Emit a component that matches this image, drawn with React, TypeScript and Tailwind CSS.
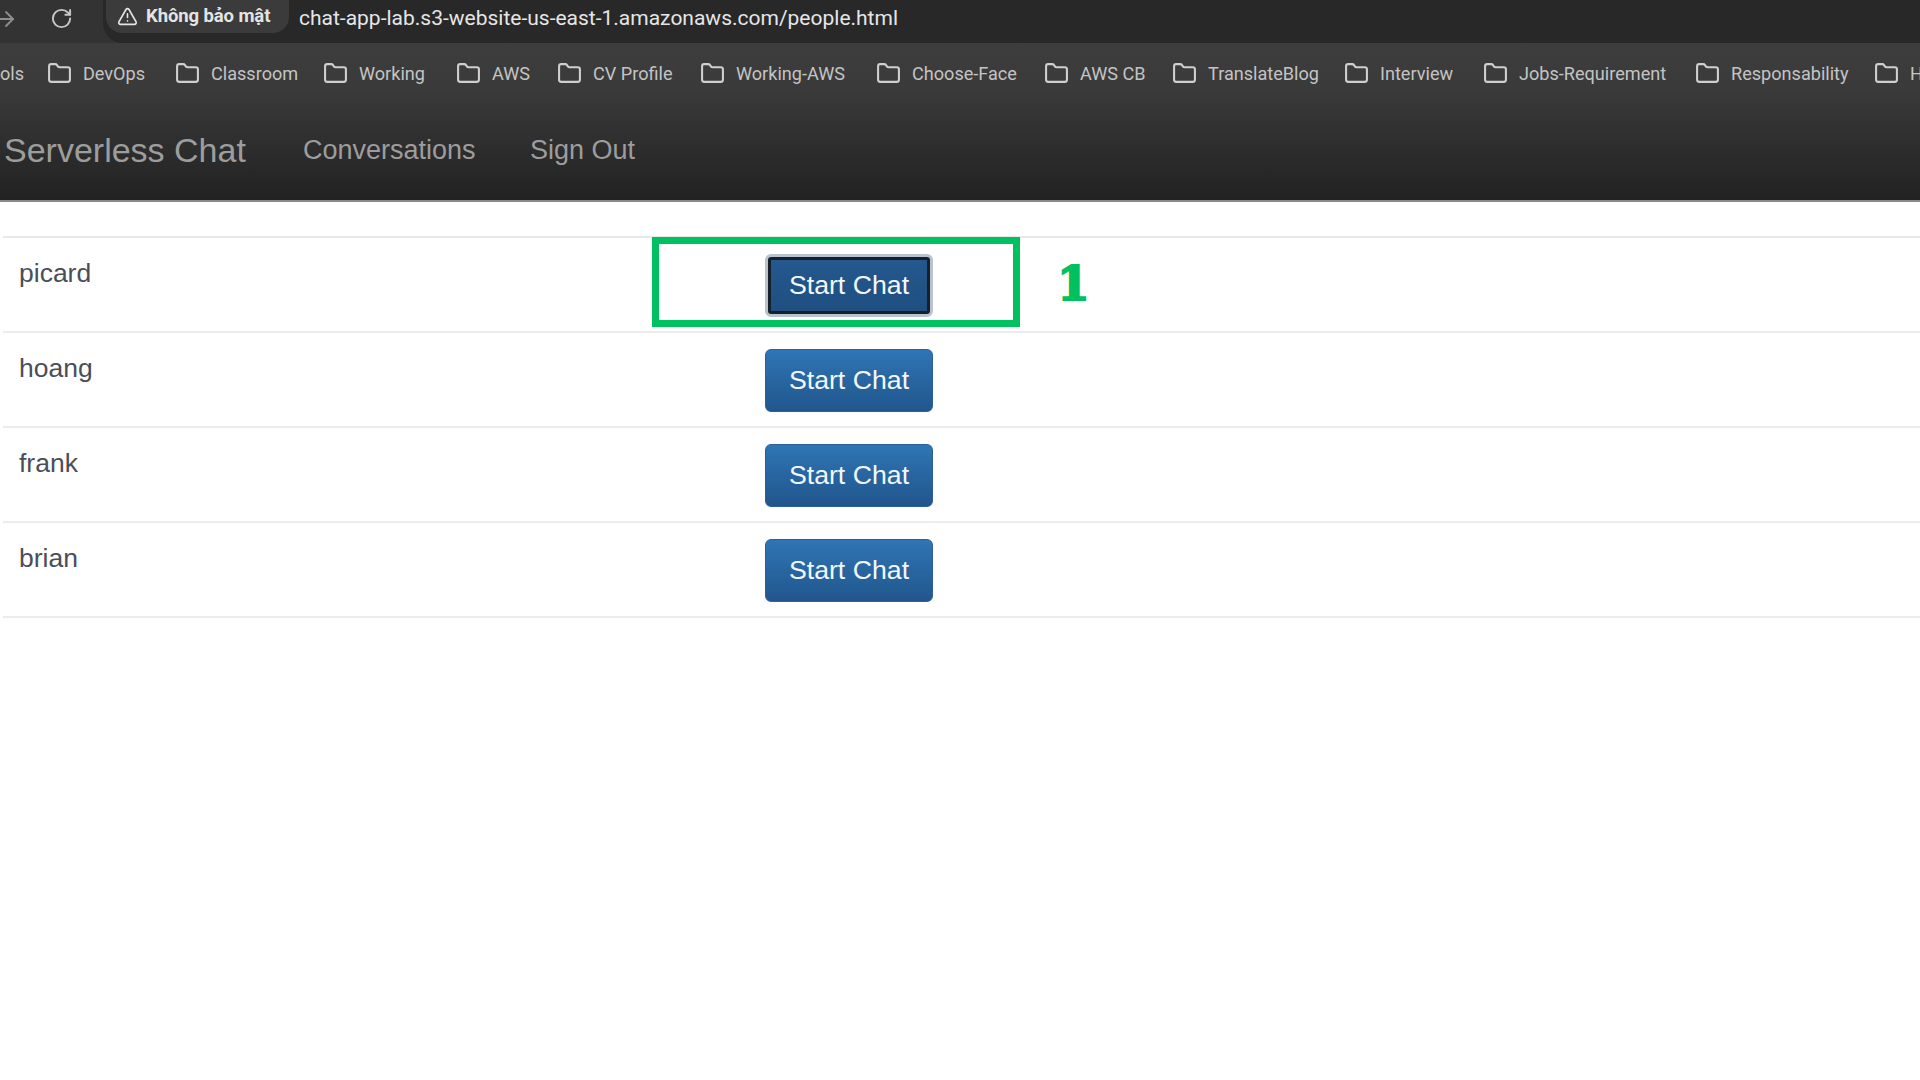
import { AlertTriangle, ArrowRight, Folder, RotateCw } from 'lucide-react';

// 책갈피 막대: 폭을 고정해 원본의 시작 위치에 맞춘다
const bookmarks = [
  { label: 'DevOps', width: 'w-[128px]' },
  { label: 'Classroom', width: 'w-[148px]' },
  { label: 'Working', width: 'w-[133px]' },
  { label: 'AWS', width: 'w-[101px]' },
  { label: 'CV Profile', width: 'w-[143px]' },
  { label: 'Working-AWS', width: 'w-[176px]' },
  { label: 'Choose-Face', width: 'w-[168px]' },
  { label: 'AWS CB', width: 'w-[128px]' },
  { label: 'TranslateBlog', width: 'w-[172px]' },
  { label: 'Interview', width: 'w-[139px]' },
  { label: 'Jobs-Requirement', width: 'w-[212px]' },
  { label: 'Responsability', width: 'w-[179px]' },
  { label: 'H', width: 'w-[60px]' },
];

const people = ['picard', 'hoang', 'frank', 'brian'];

function StartChat({ focused }: { focused: boolean }) {
  return (
    <button
      type="button"
      className={
        focused
          ? "h-[63px] w-[168px] rounded-[6px] border-[3px] border-[#b9c3cd] bg-gradient-to-b from-[#24588f] to-[#1f4f80] text-[26.7px] text-[#f2f7fb] shadow-[inset_0_0_0_3px_#15202c] [font-family:'Liberation_Sans',sans-serif]"
          : "h-[63px] w-[168px] rounded-[6px] border border-[#2b6198] bg-gradient-to-b from-[#2f75b5] to-[#21568c] text-[26.7px] text-[#f2f7fb] [font-family:'Liberation_Sans',sans-serif]"
      }
    >
      Start Chat
    </button>
  );
}

export default function App() {
  return (
    <div className="relative h-[1080px] w-[1920px] overflow-hidden bg-white [font-family:'Liberation_Sans',sans-serif]">
      {/* 브라우저 주소 표시줄 */}
      <div className="flex h-[43px] bg-[#333333]">
        <div className="flex w-[103px] items-start pt-[6px] text-[#8f8f8f]">
          <ArrowRight size={24} strokeWidth={1.8} className="-ml-[6px] mt-[1px]" />
          <RotateCw size={23} strokeWidth={2} className="ml-[32px] mt-[1px] text-[#c8c8c8]" />
        </div>
        <div className="flex flex-1 items-start rounded-bl-[20px] bg-[#282828] pl-[3px]">
          <div className="flex h-[33px] w-[183px] items-center gap-[8px] rounded-b-[16px] bg-[#3b3b3b] pl-[11px] text-[#e4e4e4]">
            <AlertTriangle size={21} strokeWidth={1.8} />
            <span className="text-[18.5px] font-bold tracking-[-0.1px] whitespace-nowrap [font-family:'Roboto',sans-serif]">
              Không bảo mật
            </span>
          </div>
          <span className="ml-[10px] pt-[4px] text-[21px] leading-[28px] whitespace-nowrap text-[#e6e6e6] [font-family:'Roboto',sans-serif]">
            chat-app-lab.s3-website-us-east-1.amazonaws.com/people.html
          </span>
        </div>
      </div>

      {/* 책갈피 + 내비게이션 배경 그라데이션 */}
      <div className="h-[159px] border-b-2 border-[#8a8a8a] bg-gradient-to-b from-[#3d3d3d] via-[#3a3a3a] via-30% to-[#222222]">
        <div className="flex h-[61px] items-center overflow-hidden text-[18.1px] text-[#c4c4c4] [font-family:'Roboto',sans-serif]">
          <span className="w-[47px] shrink-0 pr-[29px] text-right">ols</span>
          {bookmarks.map((b) => (
            <div key={b.label} className={`flex shrink-0 items-center gap-[11px] whitespace-nowrap ${b.width}`}>
              <Folder size={25} strokeWidth={2} className="shrink-0 text-[#cfcfcf]" />
              <span>{b.label}</span>
            </div>
          ))}
        </div>
        <div className="flex h-[93px] items-center pl-[4px] text-[#9d9d9d]">
          <span className="w-[299px] text-[34px]">Serverless Chat</span>
          <span className="w-[227px] text-[27px]">Conversations</span>
          <span className="text-[27px]">Sign Out</span>
        </div>
      </div>

      {/* 사용자 목록 */}
      <div className="ml-[3px] mt-[34px] border-t-2 border-[#e8e8e8]">
        {people.map((name, i) => (
          <div key={name} className="flex h-[95px] border-b-2 border-[#ececec]">
            <span className="w-[762px] pl-[16px] pt-[17px] text-[26.5px] leading-[36px] text-[#4a4f57]">
              {name}
            </span>
            <div className="pt-[16px]">
              <StartChat focused={i === 0} />
            </div>
          </div>
        ))}
      </div>

      {/* 주석: 초록 강조 상자와 번호 */}
      <div className="absolute left-[652px] top-[237px] h-[90px] w-[368px] border-[7px] border-[#00c060]" />
      <span className="absolute left-[1057px] top-[254px] text-[47px] leading-[60px] font-bold text-[#00c060] [-webkit-text-stroke:2px_#00c060] [font-family:'DejaVu_Serif',serif]">
        1
      </span>
    </div>
  );
}
